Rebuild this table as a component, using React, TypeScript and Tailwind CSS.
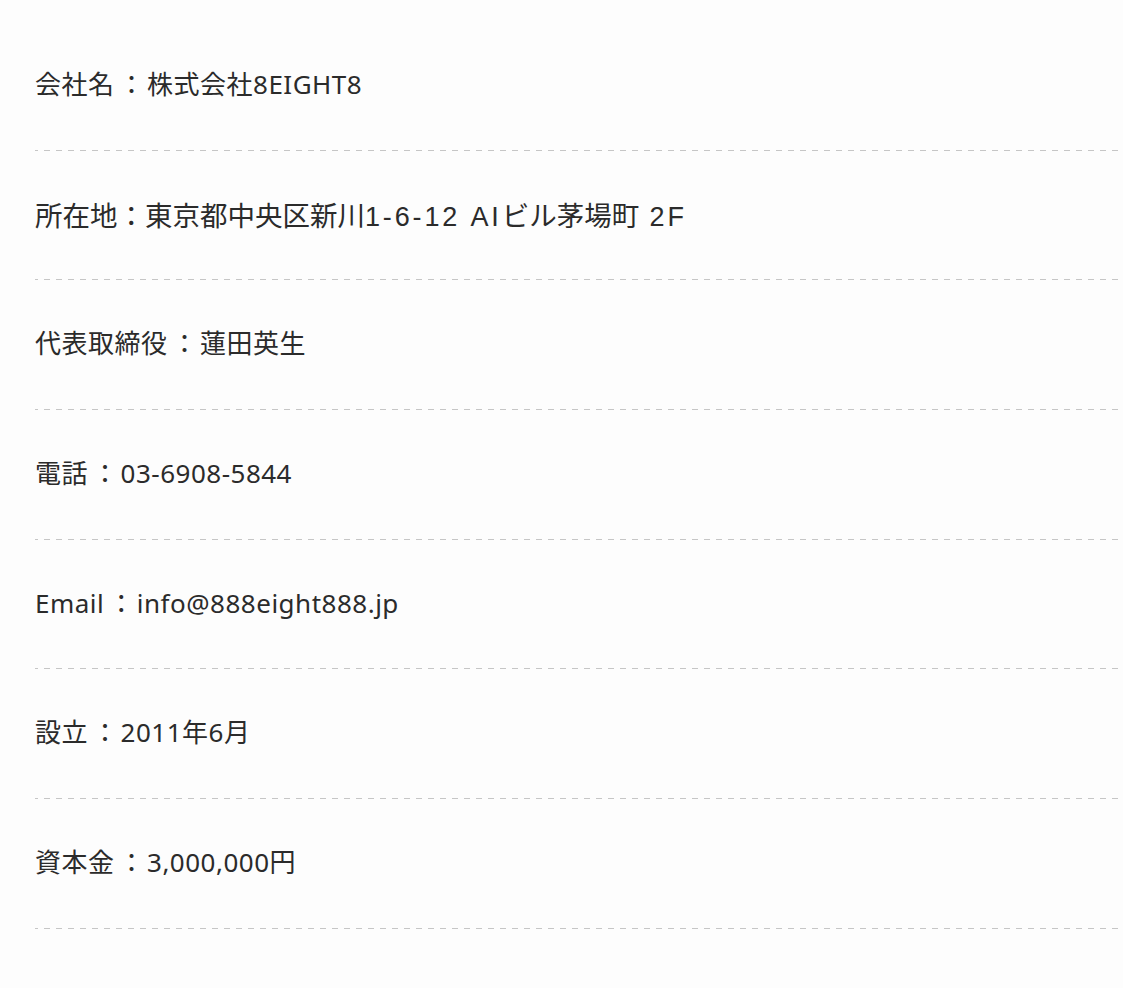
import React from "react";

const rows: { label: string; value: React.ReactNode }[] = [
  { label: "会社名", value: "株式会社8EIGHT8" },
  { label: "代表取締役", value: "蓮田英生" },
  { label: "電話", value: "03-6908-5844" },
  { label: "Email", value: "info@888eight888.jp" },
  { label: "設立", value: "2011年6月" },
  { label: "資本金", value: "3,000,000円" },
];

const Dashed = () => (
  <div className="h-px w-full bg-[linear-gradient(to_right,#c6c6c6_3px,transparent_3px,transparent_9px,#c6c6c6_9px)] bg-[length:12px_1px] bg-repeat-x" />
);

const Row = ({ children }: { children: React.ReactNode }) => (
  <div>
    <div className="h-[128.67px] overflow-hidden whitespace-nowrap pt-[43px] leading-[40px]">{children}</div>
    <Dashed />
  </div>
);

const Plain = ({ label, value }: { label: string; value: React.ReactNode }) => (
  <Row>
    <span className="text-[26px] tracking-[0.5px] font-['Noto_Sans','Noto_Sans_CJK_JP',sans-serif]">
      {label}
      <span className="ml-[4px] mr-[2px]">：</span>
      {value}
    </span>
  </Row>
);

const Address = () => (
  <Row>
    <span className="text-[27.5px] font-['Noto_Sans_CJK_JP',sans-serif]">所在地：東京都中央区新川</span>
    <span className="text-[27px] tracking-[2.85px] font-['Liberation_Sans','Noto_Sans_CJK_JP',sans-serif]">1-6-12 AI</span>
    <span className="text-[27.5px] font-['Noto_Sans_CJK_JP',sans-serif]">ビル茅場町</span>
    <span className="text-[27px] tracking-[2.85px] font-['Liberation_Sans','Noto_Sans_CJK_JP',sans-serif]"> 2F</span>
  </Row>
);

export default function App() {
  return (
    <div className="min-h-screen bg-[#fdfdfd] pl-[35px] pt-[21px] text-[#2b2b2b]">
      <Plain label={rows[0].label} value={rows[0].value} />
      <Address />
      {rows.slice(1).map((r) => (
        <Plain key={r.label} label={r.label} value={r.value} />
      ))}
    </div>
  );
}
